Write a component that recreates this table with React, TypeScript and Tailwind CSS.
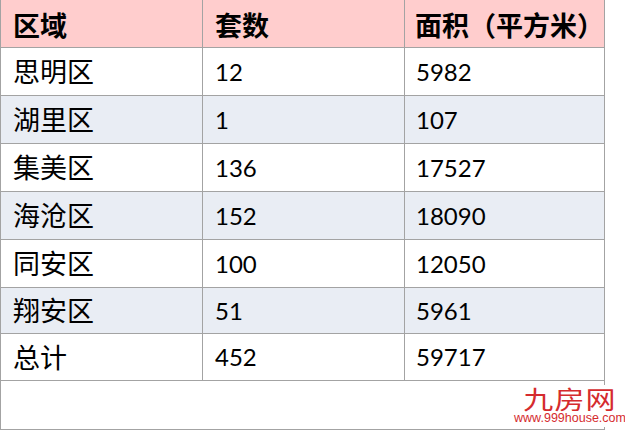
import React from "react";

const rows: { name: string; count: string; area: string; h: string }[] = [
  { name: "思明区", count: "12", area: "5982", h: "h-[48px]" },
  { name: "湖里区", count: "1", area: "107", h: "h-[48px]" },
  { name: "集美区", count: "136", area: "17527", h: "h-[48px]" },
  { name: "海沧区", count: "152", area: "18090", h: "h-[48px]" },
  { name: "同安区", count: "100", area: "12050", h: "h-[48px]" },
  { name: "翔安区", count: "51", area: "5961", h: "h-[46px]" },
  { name: "总计", count: "452", area: "59717", h: "h-[47px]" },
];

const cjk = "font-['Noto_Sans_CJK_SC',sans-serif]";
const num = "font-['Lato','Noto_Sans_CJK_SC',sans-serif]";

export default function App() {
  return (
    <div className="relative w-[625px] h-[430px] bg-white overflow-hidden">
      <div className="w-[605px] border-x border-[#a3a3a3] text-black">
        <div className="flex h-[48px] border-b border-[#a3a3a3] bg-[#ffcdcd]">
          <div className={`w-[202px] border-r border-[#a3a3a3] flex items-center pl-3 pt-[3px] text-[27px] font-bold ${cjk}`}>
            区域
          </div>
          <div className={`w-[202px] border-r border-[#a3a3a3] flex items-center pl-3 pt-[3px] text-[27px] font-bold ${cjk}`}>
            套数
          </div>
          <div className={`flex-1 flex items-center pl-[10px] pt-[3px] text-[27px] font-bold whitespace-nowrap ${cjk}`}>
            面积（平方米）
          </div>
        </div>
        {rows.map((r, i) => (
          <div
            key={r.name}
            className={`flex ${r.h} border-b border-[#a3a3a3] ${i % 2 === 1 ? "bg-[#e9edf4]" : "bg-white"}`}
          >
            <div className={`w-[202px] border-r border-[#a3a3a3] flex items-center pl-3 text-[27px] ${cjk}`}>
              {r.name}
            </div>
            <div className={`w-[202px] border-r border-[#a3a3a3] flex items-center pl-3 text-[24px] ${num}`}>
              {r.count}
            </div>
            <div className={`flex-1 flex items-center pl-[11px] text-[24px] ${num}`}>
              {r.area}
            </div>
          </div>
        ))}
        <div className="h-[49px] border-b border-[#a3a3a3]" />
      </div>
      <div className="absolute left-[517px] top-[385px] w-[106px] h-[42px] bg-white flex flex-col items-center text-[#d52b2e]">
        <p className={`text-[25px] leading-[26px] h-[26px] tracking-[1px] scale-x-[1.2] ${cjk}`}>
          九房网
        </p>
        <p className="text-[12.5px] leading-[15px] font-['Liberation_Sans',sans-serif] whitespace-nowrap">
          www.999house.com
        </p>
      </div>
    </div>
  );
}
